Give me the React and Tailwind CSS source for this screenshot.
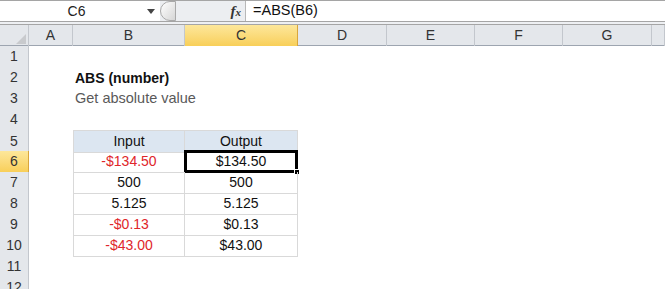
import React from 'react';

const cols = ['A', 'B', 'C', 'D', 'E', 'F', 'G', ''];
const rows = [1, 2, 3, 4, 5, 6, 7, 8, 9, 10, 11, 12];

const data = [
  ['Input', 'Output'],
  ['-$134.50', '$134.50'],
  ['500', '500'],
  ['5.125', '5.125'],
  ['-$0.13', '$0.13'],
  ['-$43.00', '$43.00'],
];

const gridCols = 'grid-cols-[29px_44px_112px_113px_89px_88px_88px_89px_1fr]';

function FormulaBar() {
  return (
    <div className="flex h-[22px] border-t border-b border-[#a5a5a5] bg-white">
      <div className="flex w-[160px] items-center bg-white">
        <span className="flex-1 pl-[6px] text-center text-[14px] text-[#222]">C6</span>
        <svg width="8" height="5" viewBox="0 0 8 5" className="mr-[5px]">
          <path d="M0 0 L8 0 L4 5 Z" fill="#444" />
        </svg>
      </div>
      <div className="flex w-[85px] items-center bg-[#eceef1]">
        <div className="h-[20px] w-[16px] rounded-l-full border border-[#a9a9a9] bg-gradient-to-br from-white to-[#d6d6d6]" />
        <span className="ml-auto mr-[4px] font-['Liberation_Serif',serif] text-[15px] font-bold italic text-[#333]">
          f<span className="text-[11px]">x</span>
        </span>
      </div>
      <div className="flex flex-1 items-center border-l border-[#b8b8b8] pl-[7px] text-[14.5px] text-[#111]">
        =ABS(B6)
      </div>
    </div>
  );
}

function ColumnHeaders() {
  return (
    <div className={`grid h-[21px] ${gridCols} border-b border-[#9da5b0] bg-[#e4e7eb]`}>
      <div className="relative border-r border-[#c3c7cd]">
        <svg width="10" height="10" viewBox="0 0 10 10" className="absolute bottom-[2px] right-[2px]">
          <path d="M10 0 L10 10 L0 10 Z" fill="#c8cacd" />
        </svg>
      </div>
      {cols.map((c, i) => (
        <div
          key={i}
          className={`flex items-center justify-center border-r text-[14px] text-[#333] ${
            c === 'C'
              ? 'border-[#d9a63c] bg-gradient-to-b from-[#fde79a] to-[#f8cf58]'
              : 'border-[#c3c7cd]'
          }`}
        >
          {c}
        </div>
      ))}
    </div>
  );
}

function Cell({ r, c }) {
  // table lives in B5:C10
  const inTable = r >= 5 && r <= 10 && (c === 1 || c === 2);
  let content = null;
  let cls = '';
  if (r === 2 && c === 1) {
    content = <span className="pl-[2px] font-bold text-[#111]">ABS (number)</span>;
  } else if (r === 3 && c === 1) {
    content = <span className="pl-[2px] text-[14.5px] text-[#595959]">Get absolute value</span>;
  } else if (inTable) {
    const text = data[r - 5][c - 1];
    const red = text.startsWith('-');
    cls = `justify-center border-r border-b border-[#d9d9d9] ${c === 1 ? 'border-l' : ''} ${
      r === 5 ? 'border-t bg-[#dce6f1]' : ''
    }`;
    content = <span className={red ? 'text-[#e0262b]' : 'text-[#111]'}>{text}</span>;
  }
  const selected = r === 6 && c === 2;
  return (
    <div className={`relative flex items-center whitespace-nowrap text-[14px] ${cls}`}>
      {content}
      {selected && (
        <>
          <div className="absolute inset-[-1px] border-[3px] border-black" />
          <div className="absolute bottom-[-3px] right-[-3px] h-[6px] w-[6px] border border-white bg-black" />
        </>
      )}
    </div>
  );
}

export default function App() {
  return (
    <div className="h-[289px] w-[665px] overflow-hidden bg-white font-['Liberation_Sans',Arial,sans-serif]">
      <FormulaBar />
      <div className="h-[3px] border-b border-[#a5a5a5] bg-[#eef0f3]" />
      <ColumnHeaders />
      {rows.map((r) => (
        <div key={r} className={`grid h-[21px] ${gridCols}`}>
          <div
            className={`flex items-center justify-center border-r border-b text-[14px] text-[#333] ${
              r === 6
                ? 'border-[#d9a63c] bg-gradient-to-b from-[#fde79a] to-[#f8cf58]'
                : 'border-[#c3c7cd] bg-[#e4e7eb]'
            }`}
          >
            {r}
          </div>
          {cols.map((_, c) => (
            <Cell key={c} r={r} c={c} />
          ))}
        </div>
      ))}
    </div>
  );
}
